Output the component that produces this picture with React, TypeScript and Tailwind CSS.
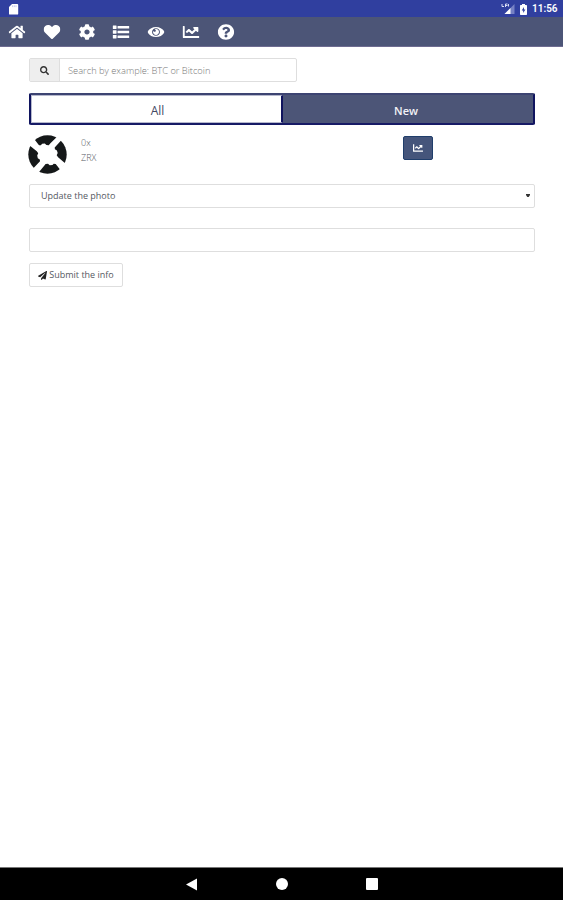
import {
  FaChartLine,
  FaCog,
  FaHeart,
  FaHome,
  FaPaperPlane,
  FaQuestionCircle,
  FaSearch,
} from "react-icons/fa";

function ListIcon({ className }: { className?: string }) {
  return (
    <svg className={className} viewBox="0 0 17 17" fill="currentColor">
      <rect x="0" y="1.7" width="4" height="3.6" rx=".4" />
      <rect x="0" y="6.7" width="4" height="3.6" rx=".4" />
      <rect x="0" y="11.7" width="4" height="3.6" rx=".4" />
      <rect x="5" y="2.1" width="12" height="2.8" rx=".4" />
      <rect x="5" y="7.1" width="12" height="2.8" rx=".4" />
      <rect x="5" y="12.1" width="12" height="2.8" rx=".4" />
    </svg>
  );
}

function EyeIcon({ className }: { className?: string }) {
  return (
    <svg className={className} viewBox="0 0 576 512" fill="currentColor">
      <path d="M569.354 231.631C512.969 135.949 407.81 72 288 72 168.14 72 63.004 135.994 6.646 231.631a47.999 47.999 0 0 0 0 48.739C63.031 376.051 168.19 440 288 440c119.86 0 224.996-63.994 281.354-159.631a47.997 47.997 0 0 0 0-48.738zM288 392c-75.162 0-136-60.827-136-136 0-75.162 60.826-136 136-136 75.162 0 136 60.826 136 136 0 75.162-60.826 136-136 136zm104-136c0 57.438-46.562 104-104 104s-104-46.562-104-104c0-17.708 4.431-34.379 12.236-48.973l-.001.032c0 23.651 19.173 42.823 42.824 42.823s42.824-19.173 42.824-42.823c0-23.651-19.173-42.824-42.824-42.824l-.032.001C253.621 156.431 270.292 152 288 152c57.438 0 104 46.562 104 104z" />
    </svg>
  );
}

const navItems = [
  { label: "Home", icon: FaHome },
  { label: "Favorites", icon: FaHeart },
  { label: "Settings", icon: FaCog },
  { label: "List", icon: ListIcon },
  { label: "Watch", icon: EyeIcon },
  { label: "Charts", icon: FaChartLine },
  { label: "Help", icon: FaQuestionCircle },
];

function StatusBar() {
  return (
    <div className="h-[17px] bg-[#303f9f] text-white flex items-center justify-between pl-[9px] pr-[5px]">
      <svg className="w-[10px] h-[11px] mt-px" viewBox="0 0 10 11" fill="currentColor">
        <path d="M3 0H8.3a.9.9 0 0 1 .9.9v8.8a.9.9 0 0 1-.9.9H.9a.9.9 0 0 1-.9-.9V3z" />
        <path d="M3.6 1.3v1.8M5.3 1.3v1.8M7 1.3v1.8" stroke="#aeb6e4" strokeWidth=".7" />
      </svg>
      <div className="flex items-center mt-px">
        <svg className="w-[14px] h-[12px] mr-[5px]" viewBox="0 0 14 12">
          <path d="M13.5 1v10H3.5z" fill="#7681c4" />
          <path d="M9.5 5v6h-6z" fill="#fff" />
          <path d="M1 1v2.5h2M4.5 4V1h2M4.5 2.5h2M7.5 1v2.5" stroke="#d8dcf4" fill="none" />
        </svg>
        <svg className="w-[7px] h-[11px] mr-[5px]" viewBox="0 0 7 11">
          <path d="M2 0h3v1h1.3q.7 0 .7.7v8.6q0 .7-.7.7H.7q-.7 0-.7-.7V1.7Q0 1 .7 1H2z" fill="#fff" />
          <path d="M4 3 1.7 6.5h1.5V9l2.2-3.5H4z" fill="#303f9f" />
        </svg>
        <span className="text-[10px] leading-none font-semibold w-[26px] whitespace-nowrap font-['Roboto',sans-serif]">
          11:56
        </span>
      </div>
    </div>
  );
}

function ZrxLogo() {
  return (
    <svg className="w-[39px] h-[39px] shrink-0" viewBox="0 0 39 39">
      <circle cx="19.5" cy="19.5" r="19.2" fill="#151819" />
      <path
        d="M2.6 6.5 5.8 3.6 11 10.2l1.8.1 1.4-1.5 2.6-.2 1.6 1.4 2.4.2 1.4-1.6L29.8 1 34 4.6 26.7 12.4l.2 1.8 2 1.2.8 2.6-1 2.2 1.4 2 7.3 6.3-5 6.5-4.7-6-2-.3-1.2 1.4-2.8.1-1.7-1.5-2.4.2-1.4 1.8L9.4 39 4.2 34.6 12 26.2l-.2-1.8-2-1.2-.6-2.7 1-2.2-1.4-2L1 10z"
        fill="#fff"
      />
    </svg>
  );
}

export default function App() {
  return (
    <div className="h-screen flex flex-col bg-white overflow-hidden text-[#55595f] font-['Open_Sans','Noto_Sans',sans-serif]">
      <StatusBar />
      <nav className="h-[30px] bg-[#4c5577] border-b border-[#6e6c91] text-white flex items-center pt-px pl-[7px] gap-[14.8px]">
        {navItems.map(({ label, icon: Icon }) => (
          <a key={label} aria-label={label} className="w-5 flex justify-center">
            <Icon className="size-4 scale-x-105" />
          </a>
        ))}
      </nav>

      <main className="flex-1 pl-[29px] pr-7 pt-[11px]">
        <div className="h-6 w-[268px] flex border border-[#dedede] rounded-xs">
          <span className="w-[30px] bg-[#eee] border-r border-[#dedede] flex items-center justify-center">
            <FaSearch className="size-[9px] text-[#333]" />
          </span>
          <input
            placeholder="Search by example: BTC or Bitcoin"
            className="flex-1 min-w-0 px-2 pt-px text-[9.3px] font-light placeholder:text-[#777] outline-none"
          />
        </div>

        <div className="mt-[11px] h-8 flex rounded-xs border-2 border-t-[#3d4472] border-x-[#10145f] border-b-[#171b66] bg-[#4c5577] text-[11px]">
          <button className="w-[252px] bg-white border border-[#b6b9cd] border-r-2 border-r-[#10145f] text-[#424862] text-xs pt-1 pl-0.5">
            All
          </button>
          <button className="flex-1 text-[#f3f3f8] font-semibold pt-1 pr-1">New</button>
        </div>

        <div className="mt-[10px] h-[39px] -ml-px flex">
          <ZrxLogo />
          <div className="ml-[14px] w-[322px] text-[9px] leading-[15px] font-light">
            <p>0x</p>
            <p>ZRX</p>
          </div>
          <button
            aria-label="Chart"
            className="mt-px w-[30px] h-6 rounded-xs bg-[#45557b] border border-[#203e6b] text-white flex items-center justify-center"
          >
            <FaChartLine className="size-[10px]" />
          </button>
        </div>

        <button className="mt-[10px] h-6 w-full flex items-center justify-between border border-[#dedede] rounded-xs pl-[11px] pr-1 text-[9px]">
          <span>Update the photo</span>
          <svg className="w-1 h-[3px] mb-px" viewBox="0 0 4 3">
            <path d="M0 0h4v1L2.7 3H1.3L0 1z" fill="#333" />
          </svg>
        </button>
        <input className="block mt-5 h-6 w-full border border-[#dedede] rounded-xs outline-none" />
        <button className="mt-[11px] h-6 w-[94px] border border-[#dedede] rounded-xs flex items-center justify-center gap-0.5 text-[9px] whitespace-nowrap">
          <FaPaperPlane className="size-[9px] text-[#222]" />
          Submit the info
        </button>
      </main>

      <footer className="h-[33px] bg-black border-t border-[#777] flex items-center justify-center gap-[78px]">
        <svg className="w-3 h-[13px]" viewBox="0 0 12 13">
          <path d="M11 .5v12L0 6.5z" fill="#fff" />
        </svg>
        <span className="size-3 rounded-full bg-white" />
        <span className="size-3 rounded-[1px] bg-white" />
      </footer>
    </div>
  );
}
